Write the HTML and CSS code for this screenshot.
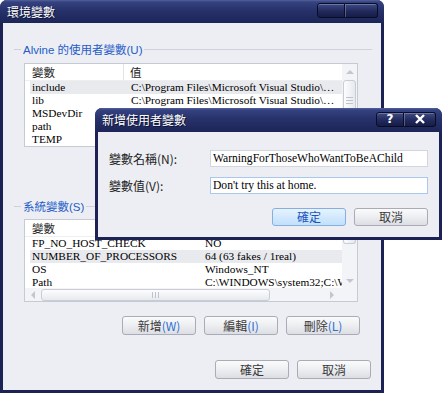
FILE: index.html
```html
<!DOCTYPE html>
<html lang="zh-Hant">
<head>
    <meta charset="UTF-8">
    <title>環境變數</title>
    <link rel="stylesheet" href="styles.css">
</head>
<body>
    <div class="desk">
        <!-- main window -->
        <div class="win main">
            <div class="titlebar">
                <span class="title">環境變數</span>
                <div class="caps">
                    <span class="cap"></span>
                    <span class="cap wide"></span>
                </div>
            </div>
            <div class="client">
                <div class="group">
                    <span class="gline short"></span>
                    <span class="glabel">Alvine 的使用者變數(U)</span>
                    <span class="gline"></span>
                </div>
                <div class="list user">
                    <div class="lbody">
                        <div class="lrow head"><span class="c1">變數</span><span class="c2">值</span></div>
                        <div class="lrow sel"><span class="c1">include</span><span class="c2">C:\Program Files\Microsoft Visual Studio\VC98\include</span></div>
                        <div class="lrow"><span class="c1">lib</span><span class="c2">C:\Program Files\Microsoft Visual Studio\VC98\lib</span></div>
                        <div class="lrow"><span class="c1">MSDevDir</span><span class="c2">C:\Program Files\Microsoft Visual Studio\Common</span></div>
                        <div class="lrow"><span class="c1">path</span><span class="c2">C:\Program Files\Microsoft Visual Studio\Common</span></div>
                        <div class="lrow"><span class="c1">TEMP</span><span class="c2">C:\Documents and Settings\Alvine\Local Settings</span></div>
                    </div>
                    <div class="vscroll">
                        <span class="arrow up"></span>
                        <span class="vthumb top"><span class="grip-h"></span></span>
                    </div>
                </div>

                <div class="group second">
                    <span class="gline short"></span>
                    <span class="glabel">系統變數(S)</span>
                    <span class="gline"></span>
                </div>
                <div class="list sys">
                    <div class="lbody">
                        <div class="lrow head"><span class="c1">變數</span><span class="c2">值</span></div>
                        <div class="lrow"><span class="c1">FP_NO_HOST_CHECK</span><span class="c2">NO</span></div>
                        <div class="lrow sel"><span class="c1">NUMBER_OF_PROCESSORS</span><span class="c2">64 (63 fakes / 1real)</span></div>
                        <div class="lrow"><span class="c1">OS</span><span class="c2">Windows_NT</span></div>
                        <div class="lrow"><span class="c1">Path</span><span class="c2 clip">C:\WINDOWS\system32;C:\WINDOWS</span></div>
                    </div>
                    <div class="vscroll">
                        <span class="vthumb short"></span>
                        <span class="vtrack"></span>
                        <span class="arrow down"></span>
                    </div>
                    <div class="hscroll">
                        <span class="arrow left"></span>
                        <span class="hthumb"><span class="grip-v"></span></span>
                        <span class="htrack"></span>
                        <span class="arrow right"></span>
                    </div>
                    <div class="corner"></div>
                </div>

                <div class="btnrow first">
                    <button class="btn">新增<u>(W)</u></button>
                    <button class="btn">編輯<u>(I)</u></button>
                    <button class="btn">刪除<u>(L)</u></button>
                </div>
                <div class="btnrow last">
                    <button class="btn">確定</button>
                    <button class="btn">取消</button>
                </div>
            </div>
        </div>

        <!-- new user variable dialog -->
        <div class="win dlg">
            <div class="titlebar">
                <span class="title">新增使用者變數</span>
                <div class="caps">
                    <span class="cap"><span class="qmark">?</span></span>
                    <span class="cap wide">
                        <svg width="14" height="10" viewBox="0 0 14 10"><path d="M3 1 L11 9 M11 1 L3 9" stroke="#fff" stroke-width="2.4"/></svg>
                    </span>
                </div>
            </div>
            <div class="dclient">
                <div class="field">
                    <label for="vname">變數名稱(N):</label>
                    <input type="text" id="vname" value="WarningForThoseWhoWantToBeAChild">
                </div>
                <div class="field">
                    <label for="vval">變數值(V):</label>
                    <input type="text" id="vval" class="focus" value="Don't try this at home.">
                </div>
                <div class="btnrow dbtns">
                    <button class="btn default">確定</button>
                    <button class="btn">取消</button>
                </div>
            </div>
        </div>
    </div>
</body>
</html>
```

FILE: styles.css
```css
body {
    margin: 0;
    background-color: #fff;
    font-family: "Liberation Sans", "Noto Sans CJK TC", sans-serif;
    font-size: 12px;
}
.desk {
    position: relative;
    width: 442px;
    height: 394px;
    overflow: hidden;
}
.win {
    position: absolute;
    box-sizing: border-box;
    display: flex;
    flex-direction: column;
    background-color: #1c2354;
    border: 3px solid #1c2354;
    border-top: none;
    border-radius: 7px 7px 0 0;
}
.main {
    left: 0;
    top: 0;
    width: 384px;
    height: 393px;
}
.dlg {
    left: 95px;
    top: 108px;
    width: 347px;
    height: 132px;
}
.titlebar {
    display: flex;
    align-items: center;
    justify-content: space-between;
    height: 22px;
    margin: 0 -3px;
    padding: 0 6px 1px 7px;
    border-radius: 7px 7px 0 0;
    background: linear-gradient(#53639f 0, #34427f 2px, #27326b 45%, #1d2558 100%);
}
.dlg .titlebar {
    height: 23px;
}
.title {
    color: #fff;
    font-family: "Noto Sans CJK TC", sans-serif;
    font-size: 12px;
    text-shadow: 1px 1px 0 #0e1330;
}
.caps {
    display: flex;
    margin-top: -1px;
}
.cap {
    box-sizing: border-box;
    display: flex;
    align-items: center;
    justify-content: center;
    width: 28px;
    height: 15px;
    border: 1px solid #0a0d26;
    border-radius: 3px 0 0 3px;
    background: linear-gradient(#3f4b84, #222a5c 55%, #161c46);
    box-shadow: inset 0 1px 0 rgba(255, 255, 255, 0.25);
}
.cap.wide {
    width: 33px;
    border-left: none;
    border-radius: 0 3px 3px 0;
    box-shadow: inset 1px 1px 0 rgba(255, 255, 255, 0.25);
}
.dlg .cap.wide {
    width: 32px;
}
.qmark {
    color: #fff;
    font-family: "DejaVu Sans", sans-serif;
    font-weight: bold;
    font-size: 12px;
    line-height: 12px;
}
.client {
    flex: 1;
    background-color: #eceef3;
    padding: 19px 9px 0 11px;
}
.group {
    display: flex;
    align-items: center;
    height: 14px;
}
.group.second {
    margin-top: 52px;
}
.gline {
    flex: 1;
    height: 1px;
    background-color: #cfd2da;
}
.gline.short {
    flex: 0 0 7px;
}
.glabel {
    padding: 0 2px;
    color: #1f5cc8;
    font-size: 11.5px;
}
.list {
    box-sizing: border-box;
    display: flex;
    width: 334px;
    margin-left: 10px;
    background-color: #fff;
    border: 1px solid #c6cad2;
    font-family: "Liberation Serif", "Noto Sans CJK TC", serif;
    font-size: 11.3px;
    color: #000;
}
.list.user {
    height: 84px;
    margin-top: 7px;
}
.list.sys {
    display: grid;
    grid-template-columns: 1fr 15px;
    grid-template-rows: 1fr 13px;
    height: 83px;
    margin-top: 6px;
}
.lbody {
    flex: 1;
    min-width: 0;
    overflow: hidden;
}
.lrow {
    display: flex;
    height: 13px;
    line-height: 13px;
    margin-left: 5px;
    white-space: nowrap;
}
.lrow.head {
    height: 17px;
    line-height: 16px;
    margin-left: 0;
    border-bottom: 1px solid #eceef0;
    box-sizing: border-box;
    font-family: "Noto Sans CJK TC", sans-serif;
    font-size: 11.5px;
    color: #222;
}
.lrow.sel {
    background-color: #e9eaee;
}
.c1 {
    flex: 0 0 94px;
    padding-left: 2px;
    box-sizing: border-box;
}
.c2 {
    flex: 1;
    min-width: 0;
    padding-left: 7px;
    overflow: hidden;
    text-overflow: ellipsis;
}
.c2.clip {
    text-overflow: clip;
}
.head .c1 {
    flex-basis: 99px;
    padding-left: 7px;
    border-right: 1px solid #e2e4e8;
}
.head .c2 {
    padding-left: 6px;
}
.sys .c1 {
    flex-basis: 168px;
}
.sys .head .c1 {
    flex-basis: 173px;
}
.vscroll {
    display: flex;
    flex-direction: column;
    align-items: center;
    width: 15px;
    background-color: #f3f4f7;
}
.arrow {
    display: flex;
    align-items: center;
    justify-content: center;
    width: 15px;
    height: 16px;
    flex: none;
}
.arrow.up::before {
    content: "";
    border: 4px solid transparent;
    border-top: none;
    border-bottom: 4px solid #c2c6ce;
}
.arrow.down {
    height: 14px;
}
.arrow.down::before {
    content: "";
    border: 4px solid transparent;
    border-bottom: none;
    border-top: 4px solid #c2c6ce;
}
.vthumb {
    box-sizing: border-box;
    display: flex;
    align-items: center;
    justify-content: center;
    width: 13px;
    height: 60px;
    border: 1px solid #c8ccd4;
    border-radius: 3px;
    background: linear-gradient(90deg, #fdfdfe, #e7e9ee);
}
.vthumb.top {
    align-items: flex-start;
    padding-top: 16px;
}
.vthumb.short {
    height: 24px;
    border-top: none;
    border-radius: 0 0 3px 3px;
}
.vtrack {
    flex: 1;
}
.grip-h {
    width: 7px;
    height: 5px;
    border-top: 1px solid #bfc3cb;
    border-bottom: 1px solid #bfc3cb;
    background: linear-gradient(transparent 2px, #bfc3cb 2px, #bfc3cb 3px, transparent 3px);
}
.hscroll {
    display: flex;
    align-items: center;
    background-color: #f3f4f7;
    padding: 0 2px 0 0;
}
.arrow.left,
.arrow.right {
    width: 16px;
    height: 13px;
}
.arrow.left::before {
    content: "";
    border: 4px solid transparent;
    border-left: none;
    border-right: 4px solid #c2c6ce;
}
.arrow.right::before {
    content: "";
    border: 4px solid transparent;
    border-right: none;
    border-left: 4px solid #c2c6ce;
}
.hthumb {
    box-sizing: border-box;
    display: flex;
    align-items: center;
    justify-content: center;
    width: 229px;
    height: 12px;
    border: 1px solid #c8ccd4;
    border-radius: 3px;
    background: linear-gradient(#fdfdfe, #e7e9ee);
}
.htrack {
    flex: 1;
}
.grip-v {
    width: 5px;
    height: 6px;
    border-left: 1px solid #bfc3cb;
    border-right: 1px solid #bfc3cb;
    background: linear-gradient(90deg, transparent 2px, #bfc3cb 2px, #bfc3cb 3px, transparent 3px);
}
.corner {
    background-color: #f3f4f7;
}
.btnrow {
    display: flex;
    justify-content: flex-end;
    gap: 8px;
}
.btnrow.first {
    margin-top: 14px;
    padding-right: 12px;
}
.btnrow.last {
    margin-top: 25px;
    padding-right: 1px;
}
.btn {
    box-sizing: border-box;
    width: 74px;
    height: 19px;
    padding: 0;
    border: 1px solid #a9acb4;
    border-radius: 3px;
    background: linear-gradient(#fbfbfc, #eceef1 50%, #dcdee3);
    font-family: "Noto Sans CJK TC", sans-serif;
    font-size: 12px;
    line-height: 16px;
    color: #3a3a3a;
}
.btn u {
    text-decoration: none;
    color: #2e6fcf;
}
.btn.default {
    border-color: #86aee0;
    background: linear-gradient(#e6f3fe, #d2e9fd 50%, #c2e0fb);
    color: #1d55c0;
}
.dclient {
    flex: 1;
    background-color: #eceef3;
    padding: 18px 11px 0 11px;
}
.field {
    display: flex;
    align-items: center;
    height: 17px;
    margin-bottom: 10px;
}
.field label {
    flex: 0 0 101px;
    font-family: "Noto Sans CJK TC", sans-serif;
    font-size: 12px;
    color: #222;
}
.field input {
    flex: 1;
    min-width: 0;
    box-sizing: border-box;
    height: 17px;
    padding: 0 2px;
    border: 1px solid #d3d6dc;
    background-color: #fff;
    font-family: "Liberation Serif", serif;
    font-size: 11.6px;
    color: #000;
    outline: none;
}
.field input.focus {
    border-color: #a8c8ee;
}
.btnrow.dbtns {
    margin-top: 14px;
}
.dbtns .btn {
    height: 18px;
    width: 74px;
}
```
